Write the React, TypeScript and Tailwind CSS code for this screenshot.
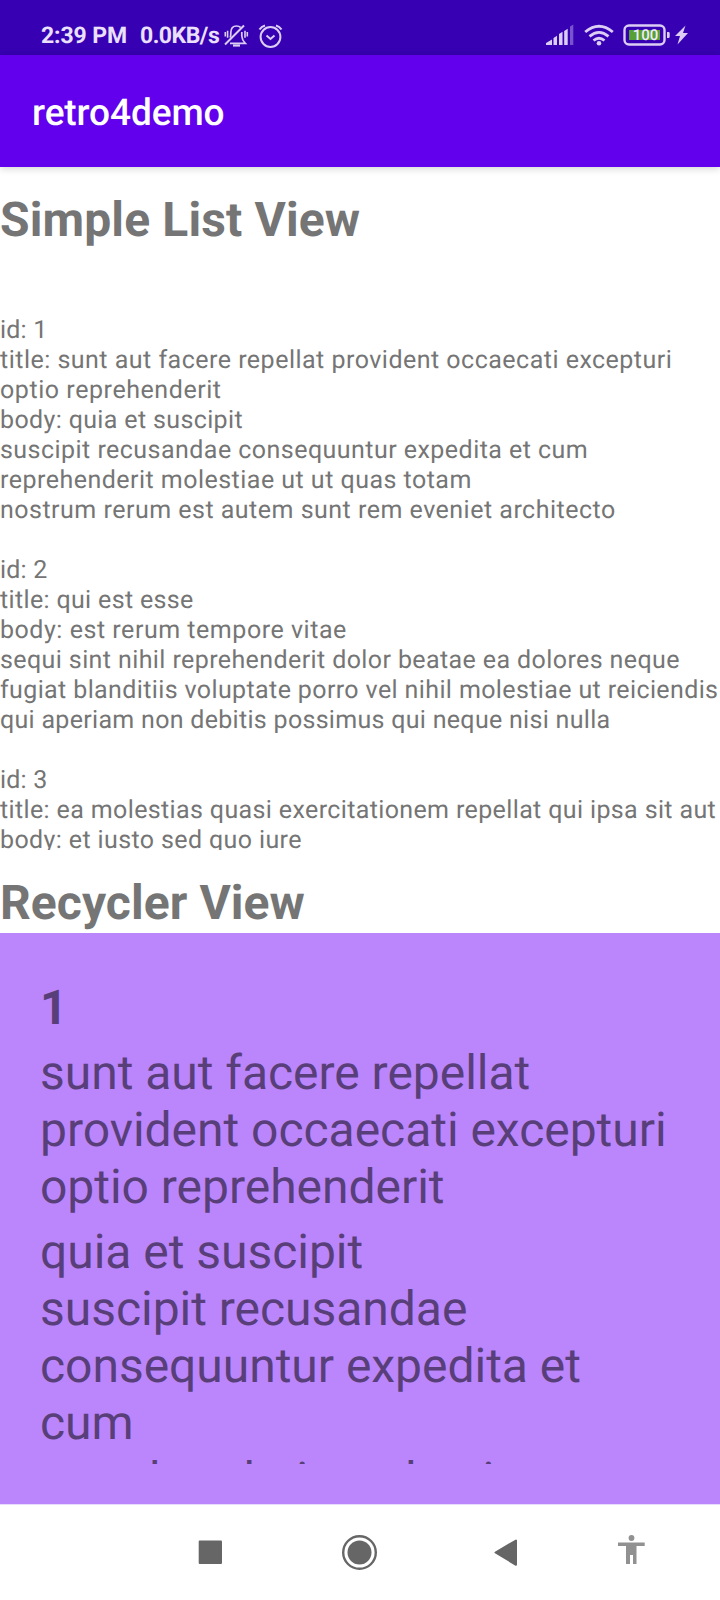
const lines = [
  { text: 'id: 1', spacing: 'tracking-[0.2px]' },
  { text: 'title: sunt aut facere repellat provident occaecati excepturi', spacing: 'tracking-[0.485px]' },
  { text: 'optio reprehenderit', spacing: 'tracking-[0.56px]' },
  { text: 'body: quia et suscipit', spacing: 'tracking-[0.36px]' },
  { text: 'suscipit recusandae consequuntur expedita et cum', spacing: 'tracking-[0.46px]' },
  { text: 'reprehenderit molestiae ut ut quas totam', spacing: 'tracking-[0.475px]' },
  { text: 'nostrum rerum est autem sunt rem eveniet architecto', spacing: 'tracking-[0.49px]' },
  { text: '', spacing: '' },
  { text: 'id: 2', spacing: 'tracking-[0.2px]' },
  { text: 'title: qui est esse', spacing: 'tracking-[0.34px]' },
  { text: 'body: est rerum tempore vitae', spacing: 'tracking-[0.53px]' },
  { text: 'sequi sint nihil reprehenderit dolor beatae ea dolores neque', spacing: 'tracking-[0.4px]' },
  { text: 'fugiat blanditiis voluptate porro vel nihil molestiae ut reiciendis', spacing: 'tracking-[0.38px]' },
  { text: 'qui aperiam non debitis possimus qui neque nisi nulla', spacing: 'tracking-[0.3px]' },
  { text: '', spacing: '' },
  { text: 'id: 3', spacing: 'tracking-[0.2px]' },
  { text: 'title: ea molestias quasi exercitationem repellat qui ipsa sit aut', spacing: 'tracking-[0.37px]' },
  { text: 'body: et iusto sed quo iure', spacing: 'tracking-[0.38px]' },
];

const cardTitle = 'sunt aut facere repellat\nprovident occaecati excepturi\noptio reprehenderit';
const cardBody =
  'quia et suscipit\nsuscipit recusandae\nconsequuntur expedita et\ncum\nreprehenderit molestiae';

function LeftStatusIcons() {
  return (
    <svg width="62" height="30" viewBox="222 20 62 30" fill="none" stroke="#dccdf5" className="shrink-0">
      <g strokeWidth="1.700">
        <path d="M230.200 36.500Q230.800 35 230.800 33V31.500Q231 25 236.500 25Q239 25 240.700 26.500M241.800 31V35Q242 39 245.300 42.300H230" />
        <path d="M225 43.500 244 24.500" strokeWidth="1.900" />
        <path d="M225.300 31v4.500M227.600 29.800v7M245 29.800v7M247.300 31v4.500" strokeWidth="1.600" />
        <path d="M233 44.500h7" strokeWidth="2.200" />
      </g>
      <circle cx="270.500" cy="36" r="9.900" strokeWidth="2" />
      <path d="M266.500 34.500l4 3.500 4-3.500" strokeWidth="2" />
      <path d="M259.500 28.500Q261.500 25.500 265 24.500M281.500 28.500Q279.500 25.500 276 24.500" strokeWidth="2.200" />
    </svg>
  );
}

function RightStatusIcons() {
  return (
    <svg width="144" height="30" viewBox="544 20 144 30" className="shrink-0" fill="#dccdf5">
      <path d="M546 45v-2l6-3.500V45zM553.500 45v-7l3.500-2.300V45zM559 45V34l3.500-2.300V45zM564.200 45V31l3.500-2.300V45z" />
      <path d="M570 45V26.500l3.300-2V45z" opacity=".4" />
      <g fill="none" stroke="#dccdf5" strokeWidth="2.800">
        <path d="M585.200 32Q599 20.500 612.800 32" />
        <path d="M589.500 36.300Q599 28.500 608.500 36.300" />
        <path d="M593.500 40.500Q599 36 604.500 40.500" />
      </g>
      <circle cx="599" cy="43.200" r="2.300" />
      <rect x="624.500" y="25.500" width="40" height="19" rx="4.500" fill="none" stroke="#dccdf5" strokeWidth="2.400" />
      <rect x="629" y="30" width="31" height="10" fill="#56a035" />
      <text x="645.500" y="40" textAnchor="middle" fontFamily="Roboto, sans-serif" fontWeight="500" fontSize="15" fill="#f1eafc">100</text>
      <path d="M667 32h1.500q1.200 0 1.200 1.200v3.600q0 1.200-1.200 1.200H667zM685.500 25.500 675 36h5l-2.500 8.500L688 33h-5z" />
    </svg>
  );
}

export default function App() {
  return (
    <div className="flex h-[1600px] w-[720px] flex-col overflow-hidden bg-white font-['Roboto',sans-serif] text-[#757575] [text-rendering:geometricPrecision]">
      <div className="flex h-[55px] shrink-0 items-start justify-between bg-[#3700b3] pt-5 pr-8 pl-[41px]">
        <div className="flex items-center text-[23px] leading-[30px] font-bold whitespace-pre text-[#eae0fb]">
          <span className="w-[99px] pt-px tracking-[-0.1px]">2:39 PM</span>
          <span className="w-[82px] pt-px tracking-[-0.5px]">0.0KB/s</span>
          <LeftStatusIcons />
        </div>
        <RightStatusIcons />
      </div>
      <header className="z-10 flex h-28 shrink-0 items-center bg-[#6200ee] pt-1 pl-8 shadow-[0_1px_8px_rgba(0,0,0,0.2)]">
        <h1 className="text-[37px] leading-none font-medium tracking-[-0.1px] text-white">retro4demo</h1>
      </header>
      <h2 className="mt-[21px] h-[64px] shrink-0 text-[48px] leading-[64px] font-bold tracking-[0.13px]">Simple List View</h2>
      <div className="mt-[64px] h-[534px] shrink-0 overflow-hidden text-[25px] leading-[30px] whitespace-pre">
        {lines.map((line, i) => (
          <p key={i} className={`h-[30px] ${line.spacing}`}>{line.text}</p>
        ))}
      </div>
      <h2 className="mt-[22px] h-[61px] shrink-0 text-[48px] leading-[62px] font-bold tracking-[0.08px]">Recycler View</h2>
      <section className="h-[571px] shrink-0 bg-[#bb86fc] px-10 py-10 text-[#593f79]">
        <div className="h-[491px] overflow-hidden text-[48px] leading-[57px] tracking-[-0.03px] whitespace-pre">
          <p className="mt-1.5 font-bold">1</p>
          <p className="mt-2">{cardTitle}</p>
          <p className="mt-2">{cardBody}</p>
        </div>
      </section>
      <nav className="flex h-24 shrink-0 items-center border-t border-[#e9dcfa]">
        <svg width="720" height="95" viewBox="0 1505 720 95" fill="#666">
          <rect x="198.700" y="1540.500" width="23.300" height="23.500" rx="1" />
          <circle cx="359.500" cy="1552.500" r="16.300" fill="none" stroke="#666" strokeWidth="2.400" />
          <circle cx="359.500" cy="1552.500" r="12" />
          <path d="M495.500 1552.500 516 1540.500V1564.800z" stroke="#666" strokeWidth="2" strokeLinejoin="round" />
          <g fill="#919191">
            <circle cx="631.500" cy="1538" r="2.900" />
            <path d="M618 1542.500h26.700v3.500H636.500v18H633v-9h-3v9h-4V1546h-8z" />
          </g>
        </svg>
      </nav>
    </div>
  );
}
